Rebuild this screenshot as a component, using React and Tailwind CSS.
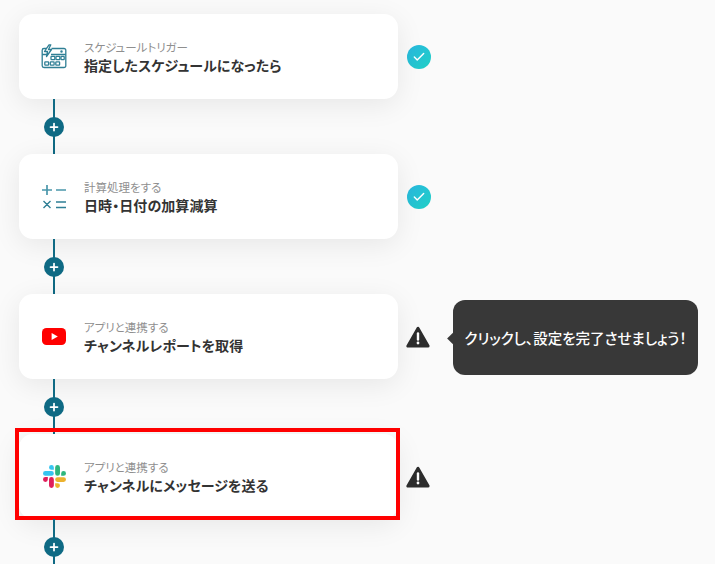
import { Check, Plus } from "lucide-react";

const FONT = "font-['Noto_Sans_CJK_JP',sans-serif] [font-feature-settings:'palt']";

function ScheduleIcon() {
  return (
    <svg width="26" height="26" viewBox="0 0 26 26" fill="none" stroke="#2f7f95" strokeWidth="1.300">
      <path d="M7 4.500H3a1.800 1.800 0 0 0-1.800 1.800v15.400A1.800 1.800 0 0 0 3 23.500h20a1.800 1.800 0 0 0 1.800-1.800V6.300A1.800 1.800 0 0 0 23 4.500H10.500" />
      <path d="M1.200 10.500h5M10 10.500h14.800" />
      <path d="M8 .8 3.500 7.500h3l-1 5 5-7H7.500L9.800 .8z" fill="#fff" strokeLinejoin="round" />
      <circle cx="20.500" cy="7.500" r=".6" fill="#2f7f95" />
      <rect x="10" y="12.300" width="3.800" height="3.400" rx=".6" />
      <rect x="15" y="12.300" width="3.800" height="3.400" rx=".6" />
      <rect x="20" y="12.300" width="3.200" height="3.400" rx=".6" />
      <rect x="3.800" y="17.800" width="3.800" height="3.400" rx=".6" />
      <rect x="9.300" y="17.800" width="3.800" height="3.400" rx=".6" />
      <rect x="14.800" y="17.800" width="3.800" height="3.400" rx=".6" />
    </svg>
  );
}

function CalcIcon() {
  return (
    <svg width="26" height="26" viewBox="0 0 26 26" fill="none" strokeWidth="1.700">
      <path d="M1 6h10M6 1v10M15 6h10" stroke="#4a97ab" />
      <path d="M2.500 17l7 7M9.500 17l-7 7M15 18h10M15 23.500h10" stroke="#2f7f95" strokeWidth="1.400" />
    </svg>
  );
}

function YoutubeIcon() {
  return (
    <svg width="24" height="17" viewBox="0 0 24 17">
      <rect width="24" height="17" rx="4.500" fill="#f00" />
      <path d="M9.600 4.900v7.200l6.200-3.600z" fill="#fff" />
    </svg>
  );
}

function SlackIcon() {
  return (
    <svg width="23" height="23" viewBox="0 0 124 124">
      <path fill="#e01e5a" d="M26 78a13 13 0 1 1-13-13h13zm6.500 0a13 13 0 0 1 26 0v33a13 13 0 0 1-26 0z" />
      <path fill="#36c5f0" d="M45.500 26a13 13 0 1 1 13-13v13zm0 6.500a13 13 0 0 1 0 26H13a13 13 0 0 1 0-26z" />
      <path fill="#2eb67d" d="M98 45.500a13 13 0 1 1 13 13H98zm-6.500 0a13 13 0 0 1-26 0V13a13 13 0 0 1 26 0z" />
      <path fill="#ecb22e" d="M78.500 98a13 13 0 1 1-13 13V98zm0-6.500a13 13 0 0 1 0-26H111a13 13 0 0 1 0 26z" />
    </svg>
  );
}

function WarnIcon() {
  return (
    <svg width="24" height="22" viewBox="0 0 24 22">
      <path d="M12 2.500 2 20h20z" fill="#2d2d2d" stroke="#2d2d2d" strokeWidth="3.200" strokeLinejoin="round" />
      <path d="M12 7.500v6" stroke="#fff" strokeWidth="2.400" strokeLinecap="round" />
      <circle cx="12" cy="17" r="1.400" fill="#fff" />
    </svg>
  );
}

const steps = [
  { id: "schedule", icon: <ScheduleIcon />, label: "スケジュールトリガー", title: "指定したスケジュールになったら", status: "done" },
  { id: "calc", icon: <CalcIcon />, label: "計算処理をする", title: "日時・日付の加算減算", status: "done" },
  { id: "youtube", icon: <YoutubeIcon />, label: "アプリと連携する", title: "チャンネルレポートを取得", status: "warn", tip: true },
  { id: "slack", icon: <SlackIcon />, label: "アプリと連携する", title: "チャンネルにメッセージを送る", status: "warn", selected: true },
];

function Connector() {
  return (
    <div className="relative flex h-[55px] w-[379px] items-center pl-[25px]">
      <div className="absolute left-[34px] top-0 h-full w-[2px] bg-[#0f6a84]" />
      <div className="relative z-10 flex h-[20px] w-[20px] items-center justify-center rounded-full bg-[#0f6a84]">
        <Plus size={12} strokeWidth={3.500} color="#fff" />
      </div>
    </div>
  );
}

function StepCard({ step }) {
  return (
    <div className="relative flex items-center">
      <div className="relative flex h-[85px] w-[379px] items-center rounded-[14px] bg-white pl-[22px] shadow-[0_6px_28px_rgba(0,0,0,0.08)]">
        <div className="flex h-[26px] w-[26px] items-center justify-center">{step.icon}</div>
        <div className="ml-[17px] flex flex-col pt-[1px]">
          <span className="text-[11.500px] leading-[16px] text-[#8f8f8f]">{step.label}</span>
          <span className="text-[14px] font-bold leading-[20px] tracking-[0.080px] text-[#333]">{step.title}</span>
        </div>
        {step.selected && (
          <div className="absolute -left-[4px] -right-[2px] -top-[6px] -bottom-[1px] border-4 border-[#f00]" />
        )}
      </div>
      <div className="ml-[8px] flex h-[24px] w-[24px] items-center justify-center">
        {step.status === "done" ? (
          <div className="ml-[2px] flex h-[24px] w-[24px] shrink-0 items-center justify-center rounded-full bg-gradient-to-br from-[#2ab7e0] to-[#1fd0c4]">
            <Check size={14} strokeWidth={2.500} color="#fff" />
          </div>
        ) : (
          <WarnIcon />
        )}
      </div>
      {step.tip && (
        <div className="relative ml-[23px] mt-[2px] flex h-[75px] w-[245px] items-center justify-center rounded-[12px] bg-[#383838] text-[14.500px] font-medium text-white">
          <div className="absolute -left-[4px] top-[34px] h-[9px] w-[9px] rotate-45 bg-[#383838]" />
          クリックし、設定を完了させましょう！
        </div>
      )}
    </div>
  );
}

export default function App() {
  return (
    <div className={`h-[564px] w-[715px] overflow-hidden bg-[#fafafa] pl-[19px] pt-[14px] ${FONT}`}>
      {steps.map((step) => (
        <div key={step.id}>
          <StepCard step={step} />
          <Connector />
        </div>
      ))}
    </div>
  );
}
